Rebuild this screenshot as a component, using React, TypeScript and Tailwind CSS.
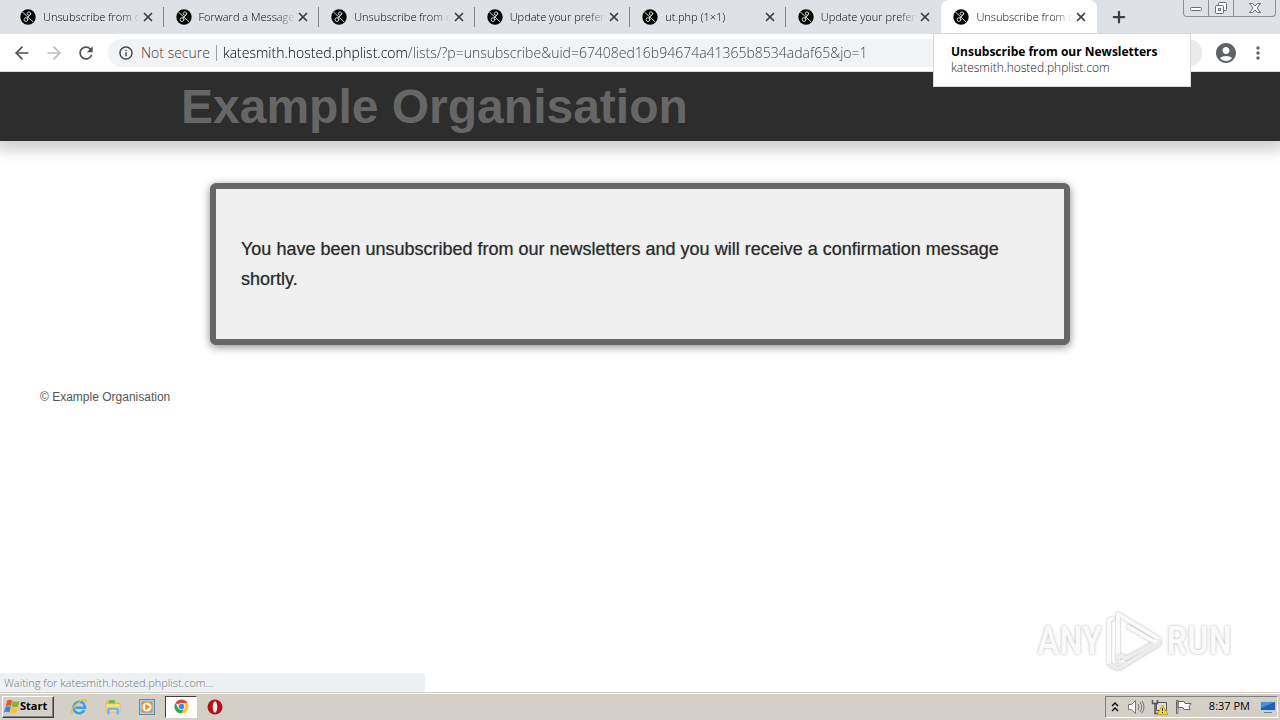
import React from "react";
import { ArrowLeft, ArrowRight, Plus, X } from "lucide-react";
import { MdRefresh, MdOutlineInfo, MdAccountCircle, MdMoreVert } from "react-icons/md";

const tabs = [
  "Unsubscribe from our",
  "Forward a Message",
  "Unsubscribe from our",
  "Update your preferences",
  "ut.php (1×1)",
  "Update your preferences",
  "Unsubscribe from our",
];

function Favicon() {
  return (
    <svg viewBox="0 0 16 16" className="size-4 shrink-0" fill="none" aria-hidden="true">
      <circle cx="8" cy="8" r="7.7" fill="#050505" />
      <g stroke="#d4d4d4" strokeWidth="1" strokeLinecap="round">
        <path d="M2.600 3.200 12.800 12.600" />
        <circle cx="9" cy="4.600" r="1.700" />
        <path d="M10.300 5.800 7 9" />
        <circle cx="6" cy="10.600" r="1.900" />
      </g>
    </svg>
  );
}

function Tab({ title, active, divider }: { title: string; active: boolean; divider: boolean }) {
  return (
    <div
      className={
        active
          ? "flex min-w-0 items-center rounded-t-lg bg-white pl-3 pr-2"
          : "flex min-w-0 items-center pl-3"
      }
    >
      <a href="#" className="flex min-w-0 flex-1 items-center gap-[7px] text-black" aria-current={active ? "page" : undefined}>
        <Favicon />
        <span className="min-w-0 flex-1 overflow-hidden whitespace-nowrap text-[11px] font-light leading-4 [mask-image:linear-gradient(to_right,black_80%,transparent)]">
          {title}
        </span>
      </a>
      <button aria-label="Close tab" className="flex size-4 shrink-0 items-center justify-center text-[#3c4043]">
        <X className="size-[14px]" strokeWidth={3} />
      </button>
      {!active && <span className={divider ? "ml-[7px] h-5 w-px bg-[#80868b]" : "ml-[7px] h-5 w-px"} />}
    </div>
  );
}

function WindowControls() {
  return (
    <div className="mr-1 flex h-[17px] w-[93px] overflow-hidden rounded-b border border-t-0 border-[#8b8f96] text-[#696d74]">
      <button aria-label="Minimize" className="flex w-[25px] items-center justify-center border-r border-[#8b8f96]">
        <svg viewBox="0 0 14 8" className="h-2 w-[14px]"><rect x="1.5" y="3.5" width="11" height="3" rx="1" fill="#fff" stroke="currentColor" /></svg>
      </button>
      <button aria-label="Restore" className="flex w-[25px] items-center justify-center border-r border-[#8b8f96]">
        <svg viewBox="0 0 14 14" className="size-[14px]" fill="#fff" stroke="currentColor">
          <rect x="4.5" y="1.5" width="8" height="8" rx="1" />
          <rect x="1.5" y="4.5" width="8" height="8" rx="1" />
          <rect x="4.5" y="7.5" width="2" height="2" />
        </svg>
      </button>
      <button aria-label="Close window" className="flex flex-1 items-center justify-center">
        <svg viewBox="0 0 14 12" className="h-3 w-[14px]" fill="#fff" stroke="currentColor">
          <path d="M1.500 1.500h3L7 4l2.500-2.500h3L9 6l3.500 4.500h-3L7 8l-2.500 2.500h-3L5 6z" />
        </svg>
      </button>
    </div>
  );
}

function StartLogo() {
  return (
    <svg viewBox="0 0 16 16" className="size-4 shrink-0" aria-hidden="true">
      <path d="M3.200 1.500C5 .4 6.700.7 8.200 1.600L7 7.200C5.300 6.300 3.800 6.300 1.700 7.100z" fill="#e8582c" />
      <path d="M8.800 2C10.500 3 12.800 3 15.500 1.900L14 7.500C11.900 8.500 9.500 8.500 7.600 7.500z" fill="#7cb342" />
      <path d="M1.500 7.900C3.500 7.100 5 7.200 6.800 8L5.500 13.500C3.800 12.600 2.200 12.600 0 13.400z" fill="#3f83d8" />
      <path d="M7.400 8.300C9.300 9.200 11.500 9.100 13.800 8.200L12.300 13.800C10 14.900 8 14.800 6 13.900z" fill="#f9c22e" />
    </svg>
  );
}

function ExplorerIcon() {
  return (
    <svg viewBox="0 0 18 18" className="size-[18px]" fill="none" aria-hidden="true">
      <path d="M14.400 12.200A5.800 5.800 0 1 1 15 8.600v1.100H5.500" stroke="#3a9fe0" strokeWidth="2.500" />
      <path d="M3 15.500C-.5 15 3 8 9 4c4-2.800 8-3.200 7.200.2" stroke="#e8b93a" strokeWidth="1.400" />
    </svg>
  );
}

function FolderIcon() {
  return (
    <svg viewBox="0 0 18 18" className="size-[18px]" aria-hidden="true">
      <path d="M2 3h5l1 1.500h7V14H2z" fill="#e9bd4f" />
      <path d="M5 2h6v4H5z" fill="#73b75b" />
      <path d="M2 5.500h14V14H2z" fill="#f7dc86" stroke="#d6a73c" strokeWidth=".5" />
      <path d="M3 16.500V12c0-1.500 1-2.500 2.500-2.500h7c1.500 0 2.500 1 2.500 2.500v4.500h-2.500V12h-7v4.500z" fill="#70b8e6" />
    </svg>
  );
}

function PlayerIcon() {
  return (
    <svg viewBox="0 0 18 18" className="size-[18px]" aria-hidden="true">
      <rect x="1.500" y="1.500" width="15" height="15" fill="#a6cdec" stroke="#5b8dbb" />
      <rect x="3.500" y="3.500" width="11" height="11" rx="1" fill="#f08a19" />
      <circle cx="9" cy="9" r="4.600" fill="#fff" />
      <path d="m7.200 5.800 5 3.200-5 3.200z" fill="#f08a19" />
    </svg>
  );
}

function ChromeIcon() {
  return (
    <svg viewBox="0 0 16 16" className="size-[15px]" aria-hidden="true">
      <path d="M8 8 1.500 4.200A7.500 7.500 0 0 1 14.500 4.250H8z" fill="#e04434" />
      <path d="M8 8V4.250h6.500A7.500 7.500 0 0 1 8 15.500L11.250 9.800z" fill="#fbc926" />
      <path d="m8 8 3.250 1.800L8 15.500A7.500 7.500 0 0 1 1.500 4.200L4.750 9.800z" fill="#34a353" />
      <circle cx="8" cy="8" r="3.700" fill="#fff" />
      <circle cx="8" cy="8" r="2.900" fill="#4384f0" />
    </svg>
  );
}

function OperaIcon() {
  return (
    <svg viewBox="0 0 16 16" className="size-4" aria-hidden="true">
      <circle cx="8" cy="8" r="7.500" fill="#b31217" />
      <ellipse cx="8" cy="8" rx="2.300" ry="5.800" fill="#f4eaea" />
    </svg>
  );
}

function Watermark() {
  return (
    <div className="absolute bottom-5 right-12 flex items-center gap-1 font-['Liberation_Sans_Narrow','Roboto_Condensed','Roboto',sans-serif] text-[38px] font-medium leading-[60px] text-[#fafafa] [text-shadow:0_0_3px_#b4b4b4]">
      <span>ANY</span>
      <svg viewBox="0 0 56 62" className="h-[62px] w-14 drop-shadow-[0_0_1px_#b0b0b0]" fill="none" stroke="#fafafa" strokeWidth="4" strokeLinejoin="round">
        <path d="M3 54V10l5-2M12 45V4l41 25-4 3-28-16" />
        <path d="M12 53V45l9 3 27-15M12 59l41-25v-5M3 54l9 5" stroke="#ededed" />
      </svg>
      <span>RUN</span>
    </div>
  );
}

const quickLaunch = [
  { name: "Internet Explorer", icon: <ExplorerIcon />, active: false },
  { name: "File Explorer", icon: <FolderIcon />, active: false },
  { name: "Media Player", icon: <PlayerIcon />, active: false },
  { name: "Chrome", icon: <ChromeIcon />, active: true },
  { name: "Opera", icon: <OperaIcon />, active: false },
];

export default function App() {
  return (
    <div className="flex min-h-screen flex-col bg-white font-['Open_Sans','Noto_Sans',sans-serif]">
      <div className="relative z-10">
        <div className="flex h-[34px] items-start bg-[#dee1e6]">
          <nav aria-label="Tabs" className="grid h-full min-w-0 flex-1 grid-cols-7 pl-2">
            {tabs.map((title, i) => (
              <Tab key={i} title={title} active={i === tabs.length - 1} divider={i < tabs.length - 2} />
            ))}
          </nav>
          <button aria-label="New tab" className="ml-3 mr-[54px] flex h-full w-5 items-center justify-center text-[#3c4043]">
            <Plus className="size-[18px]" strokeWidth={3} />
          </button>
          <WindowControls />
        </div>
        <div className="flex h-[38px] items-center border-b border-[#dadce0] bg-white px-3">
          <button aria-label="Back" className="flex w-5 justify-center text-[#4c4f53]"><ArrowLeft className="size-5" /></button>
          <button aria-label="Forward" className="ml-3 flex w-5 justify-center text-[#b9bbbe]"><ArrowRight className="size-5" /></button>
          <button aria-label="Reload" className="ml-3 flex w-5 justify-center text-[#4c4f53]"><MdRefresh className="size-5" /></button>
          <div className="ml-3 flex h-7 min-w-0 flex-1 items-center rounded-full bg-[#f1f3f4] pl-[10px] text-sm font-light text-[#3c4043]">
            <MdOutlineInfo className="size-4 shrink-0" />
            <span className="ml-[7px] whitespace-nowrap">Not secure</span>
            <span className="mx-[6px] h-4 w-px bg-[#9aa0a6]" />
            <input
              aria-label="Address"
              className="min-w-0 flex-1 bg-[linear-gradient(to_right,#000000_184px,#3c4043_184px)] bg-clip-text text-[#3c4043] outline-none [-webkit-text-fill-color:transparent]"
              defaultValue="katesmith.hosted.phplist.com/lists/?p=unsubscribe&uid=67408ed16b94674a41365b8534adaf65&jo=1"
            />
            <button aria-label="Site options" className="flex size-7 items-center justify-center rounded-full bg-[#ececed]">
              <span className="size-[3px] rounded-full bg-[#5f6368]" />
            </button>
          </div>
          <button aria-label="Profile" className="ml-3 text-[#5f6368]"><MdAccountCircle className="size-6" /></button>
          <button aria-label="Menu" className="ml-[10px] text-[#5f6368]"><MdMoreVert className="size-5" /></button>
        </div>
        <div role="tooltip" className="absolute right-[89px] top-[33px] h-[54px] w-[258px] border border-[#d5d7da] bg-white px-[17px] pt-[10px]">
          <p className="whitespace-nowrap text-xs font-bold leading-4 text-black">Unsubscribe from our Newsletters</p>
          <p className="whitespace-nowrap text-xs font-light leading-4 text-[#202124]">katesmith.hosted.phplist.com</p>
        </div>
      </div>

      <div className="relative flex-1 font-['Liberation_Sans',Arial,sans-serif]">
        <header className="h-[69px] bg-[#2d2d2d] shadow-[0_6px_12px_4px_#d3d3d3]">
          <h1 className="mx-auto max-w-[918px] text-5xl font-bold leading-[69px] text-[#666666]">Example Organisation</h1>
        </header>
        <main className="mx-auto mt-[42px] max-w-[860px] rounded-md border-[6px] border-[#666666] bg-[#f0f0f0] px-[25px] py-[45px] shadow-[0_2px_8px_#888888]">
          <p className="text-lg leading-[30px] text-[#2b2b2b] [text-shadow:0_0_1px_#888888]">
            You have been unsubscribed from our newsletters and you will receive a confirmation message shortly.
          </p>
        </main>
        <footer className="mt-11 px-10 text-xs leading-4 text-[#555555]">© Example Organisation</footer>
        <Watermark />
        <div role="status" className="absolute bottom-0 left-0 h-[19px] w-[425px] rounded-tr bg-[#eef1f4] pl-1 font-['Open_Sans','Noto_Sans',sans-serif] text-[11px] font-light leading-[19px] text-[#70757a]">
          Waiting for katesmith.hosted.phplist.com...
        </div>
      </div>

      <div className="flex h-7 items-center border-t border-[#d4d0c8] bg-[#d4d0c8] text-[11px] text-black shadow-[inset_0_1px_0_#ffffff]">
        <button className="ml-[2px] flex h-[22px] w-[52px] items-center border border-b-[#404040] border-l-white border-r-[#404040] border-t-white pl-px font-bold shadow-[inset_-1px_-1px_0_#808080]">
          <StartLogo />
          Start
        </button>
        <div className="ml-[9px] flex gap-[2px]">
          {quickLaunch.map((item) => (
            <button
              key={item.name}
              aria-label={item.name}
              className={
                item.active
                  ? "flex h-[22px] w-8 items-center justify-center border border-b-white border-l-[#404040] border-r-white border-t-[#404040] bg-white"
                  : "flex h-[22px] w-8 items-center justify-center"
              }
            >
              {item.icon}
            </button>
          ))}
        </div>
        <div className="ml-auto mr-[2px] flex h-[22px] items-center border border-b-white border-l-[#808080] border-r-white border-t-[#808080] pl-[5px] pr-px">
          <button aria-label="Show hidden icons">
            <svg viewBox="0 0 8 12" className="h-3 w-2" fill="none" stroke="#000" strokeWidth="1.400"><path d="m1 5 3-3 3 3M1 10l3-3 3 3" /></svg>
          </button>
          <button aria-label="Volume" className="ml-2">
            <svg viewBox="0 0 18 16" className="h-4 w-[18px]" fill="#fff" stroke="#777"><path d="M1.500 5.500h3l4-4v13l-4-4h-3z" /><path d="M11 5q2 3 0 6M13 3q3.500 5 0 10M15 2q4 6 0 12" fill="none" /></svg>
          </button>
          <button aria-label="Network" className="ml-[6px]">
            <svg viewBox="0 0 18 16" className="h-4 w-[18px]"><path d="M5.500 3.500h10v8h-10z" fill="#ddd" stroke="#555" /><path d="M1.500 1v3.500h5V1M4 4.500v10h4" fill="none" stroke="#555" strokeWidth="1.500" /><path d="m11.500 6 5.500 9.500H6z" fill="#ffd51f" stroke="#a88600" strokeWidth=".6" /><path d="M11 9h1v3h-1zm0 4h1v1h-1z" fill="#222" /></svg>
          </button>
          <button aria-label="Action Center" className="ml-[6px]">
            <svg viewBox="0 0 18 16" className="h-4 w-[18px]" fill="#fff" stroke="#666"><path d="M1.500 1.500h1.500v13H1.500zM3 2.500h6l1 2h6l-2 3 1 3H9l-1-2H3z" /></svg>
          </button>
          <time className="ml-4 whitespace-nowrap">8:37 PM</time>
          <button aria-label="Show desktop" className="ml-[10px]">
            <svg viewBox="0 0 16 16" className="size-4"><path d="M.5 2.500h15v9H.5z" fill="#245fb0" stroke="#b2cce9" /><path d="M1 3h14L1 9z" fill="#4f91d7" /><path d="M4 13h8v1H4z" fill="#6f7e8f" /></svg>
          </button>
        </div>
      </div>
    </div>
  );
}
